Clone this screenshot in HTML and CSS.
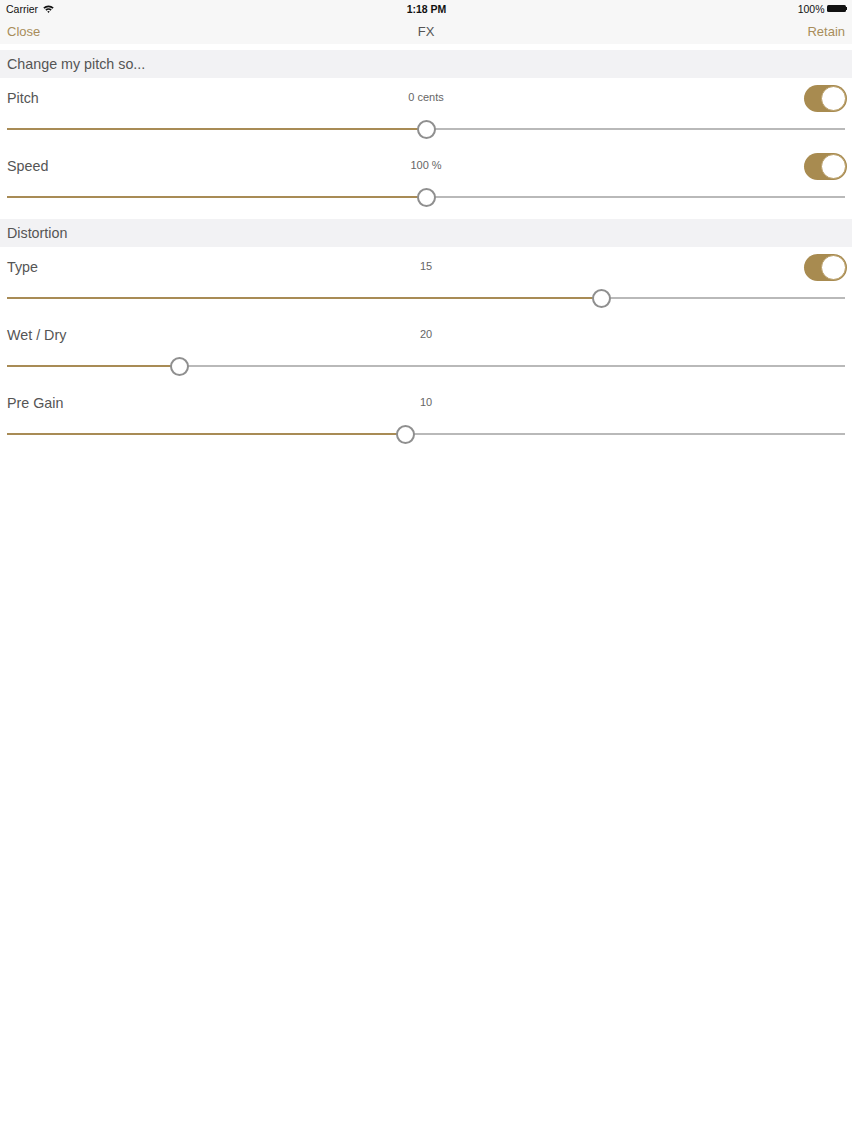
FILE: index.html
```html
<!DOCTYPE html>
<html lang="en">
<head>
    <meta charset="UTF-8">
    <meta name="viewport" content="width=device-width, initial-scale=1.0">
    <title>FX</title>
    <link rel="stylesheet" href="styles.css">
</head>
<body>

    <!-- Status bar + navigation -->
    <div class="top-bar">
        <div class="status-bar">
            <div class="status-left">
                Carrier
                <svg class="wifi" width="11" height="8" viewBox="0 0 11 8">
                    <path d="M0.3 2.6 A7.5 7.5 0 0 1 10.7 2.6 L9.5 3.8 A5.8 5.8 0 0 0 1.5 3.8 Z" fill="#111"/>
                    <path d="M2.3 4.6 A4.6 4.6 0 0 1 8.7 4.6 L7.5 5.8 A2.9 2.9 0 0 0 3.5 5.8 Z" fill="#111"/>
                    <path d="M4.3 6.6 A1.7 1.7 0 0 1 6.7 6.6 L5.5 7.9 Z" fill="#111"/>
                </svg>
            </div>
            <div class="status-time">1:18 PM</div>
            <div class="status-right">
                100%
                <span class="battery"></span>
                <span class="battery-nub"></span>
            </div>
        </div>
        <div class="nav-bar">
            <a class="nav-btn">Close</a>
            <div class="nav-title">FX</div>
            <a class="nav-btn right">Retain</a>
        </div>
    </div>

    <!-- Pitch section -->
    <div class="section-header">Change my pitch so...</div>

    <div class="fx-row">
        <div class="fx-top">
            <span class="fx-label">Pitch</span>
            <span class="fx-value">0 cents</span>
            <span class="toggle on"><span class="knob"></span></span>
        </div>
        <div class="slider">
            <div class="track-fill" style="width: 50%"></div>
            <div class="track-rest"></div>
            <div class="thumb" style="left: 50%"></div>
        </div>
    </div>

    <div class="fx-row">
        <div class="fx-top">
            <span class="fx-label">Speed</span>
            <span class="fx-value">100 %</span>
            <span class="toggle on"><span class="knob"></span></span>
        </div>
        <div class="slider">
            <div class="track-fill" style="width: 50%"></div>
            <div class="track-rest"></div>
            <div class="thumb" style="left: 50%"></div>
        </div>
    </div>

    <!-- Distortion section -->
    <div class="section-header spaced">Distortion</div>

    <div class="fx-row">
        <div class="fx-top">
            <span class="fx-label">Type</span>
            <span class="fx-value">15</span>
            <span class="toggle on"><span class="knob"></span></span>
        </div>
        <div class="slider">
            <div class="track-fill" style="width: 70.9%"></div>
            <div class="track-rest"></div>
            <div class="thumb" style="left: 70.9%"></div>
        </div>
    </div>

    <div class="fx-row">
        <div class="fx-top">
            <span class="fx-label">Wet / Dry</span>
            <span class="fx-value">20</span>
            <span></span>
        </div>
        <div class="slider">
            <div class="track-fill" style="width: 20.6%"></div>
            <div class="track-rest"></div>
            <div class="thumb" style="left: 20.6%"></div>
        </div>
    </div>

    <div class="fx-row">
        <div class="fx-top">
            <span class="fx-label">Pre Gain</span>
            <span class="fx-value">10</span>
            <span></span>
        </div>
        <div class="slider">
            <div class="track-fill" style="width: 47.5%"></div>
            <div class="track-rest"></div>
            <div class="thumb" style="left: 47.5%"></div>
        </div>
    </div>

</body>
</html>
```

FILE: styles.css
```css
body {
    font-family: "Liberation Sans", Arial, sans-serif;
    margin: 0;
    background-color: #fff;
    color: #555;
}

/* Top bar */
.top-bar {
    background-color: #f7f7f7;
    height: 44px;
}

.status-bar {
    display: grid;
    grid-template-columns: 1fr auto 1fr;
    align-items: center;
    height: 17px;
    padding: 0 5px 0 6px;
    font-size: 10.5px;
    color: #111;
}

.status-left {
    display: flex;
    align-items: center;
    gap: 5px;
}

.status-time {
    font-weight: bold;
}

.status-right {
    display: flex;
    align-items: center;
    justify-content: flex-end;
}

.battery {
    display: inline-block;
    width: 19px;
    height: 7px;
    margin-left: 2px;
    border-radius: 1.5px;
    background-color: #111;
}

.battery-nub {
    display: inline-block;
    width: 1.5px;
    height: 3px;
    background-color: #111;
}

.nav-bar {
    display: grid;
    grid-template-columns: 1fr auto 1fr;
    align-items: center;
    height: 27px;
    padding: 1px 7px 0;
    font-size: 13px;
}

.nav-btn {
    color: #a88d5a;
}

.nav-btn.right {
    text-align: right;
}

.nav-title {
    color: #555;
}

/* Sections */
.section-header {
    background-color: #f2f2f4;
    height: 28px;
    line-height: 28px;
    padding: 0 7px;
    margin-top: 6px;
    font-size: 14.3px;
    color: #555;
}

.section-header.spaced {
    margin-top: 5px;
}

.fx-row {
    height: 68px;
    padding: 0 7px;
}

.fx-top {
    display: grid;
    grid-template-columns: 1fr auto 1fr;
    align-items: center;
    height: 41px;
}

.fx-label {
    font-size: 14.3px;
    color: #555;
    margin-top: -1px;
}

.fx-value {
    font-size: 11px;
    color: #666;
    margin-top: -3px;
}

/* Toggle */
.toggle {
    justify-self: end;
    width: 43px;
    height: 27px;
    margin-right: -2px;
    border-radius: 14px;
    background-color: #a88b50;
    display: flex;
    align-items: center;
    justify-content: flex-end;
    padding: 1px;
    box-sizing: border-box;
}

.toggle .knob {
    width: 25px;
    height: 25px;
    border-radius: 50%;
    background-color: #fff;
    box-sizing: border-box;
    border: 1px solid #b89d66;
}

/* Slider */
.slider {
    position: relative;
    display: flex;
    align-items: center;
    height: 20px;
}

.track-fill {
    height: 2px;
    background-color: #a88b55;
}

.track-rest {
    flex: 1;
    height: 2px;
    background-color: #b9b9b9;
}

.thumb {
    position: absolute;
    top: 1px;
    width: 19px;
    height: 19px;
    margin-left: -9.5px;
    border: 2px solid #8f8f8f;
    border-radius: 50%;
    background-color: #fff;
    box-sizing: border-box;
}
```
